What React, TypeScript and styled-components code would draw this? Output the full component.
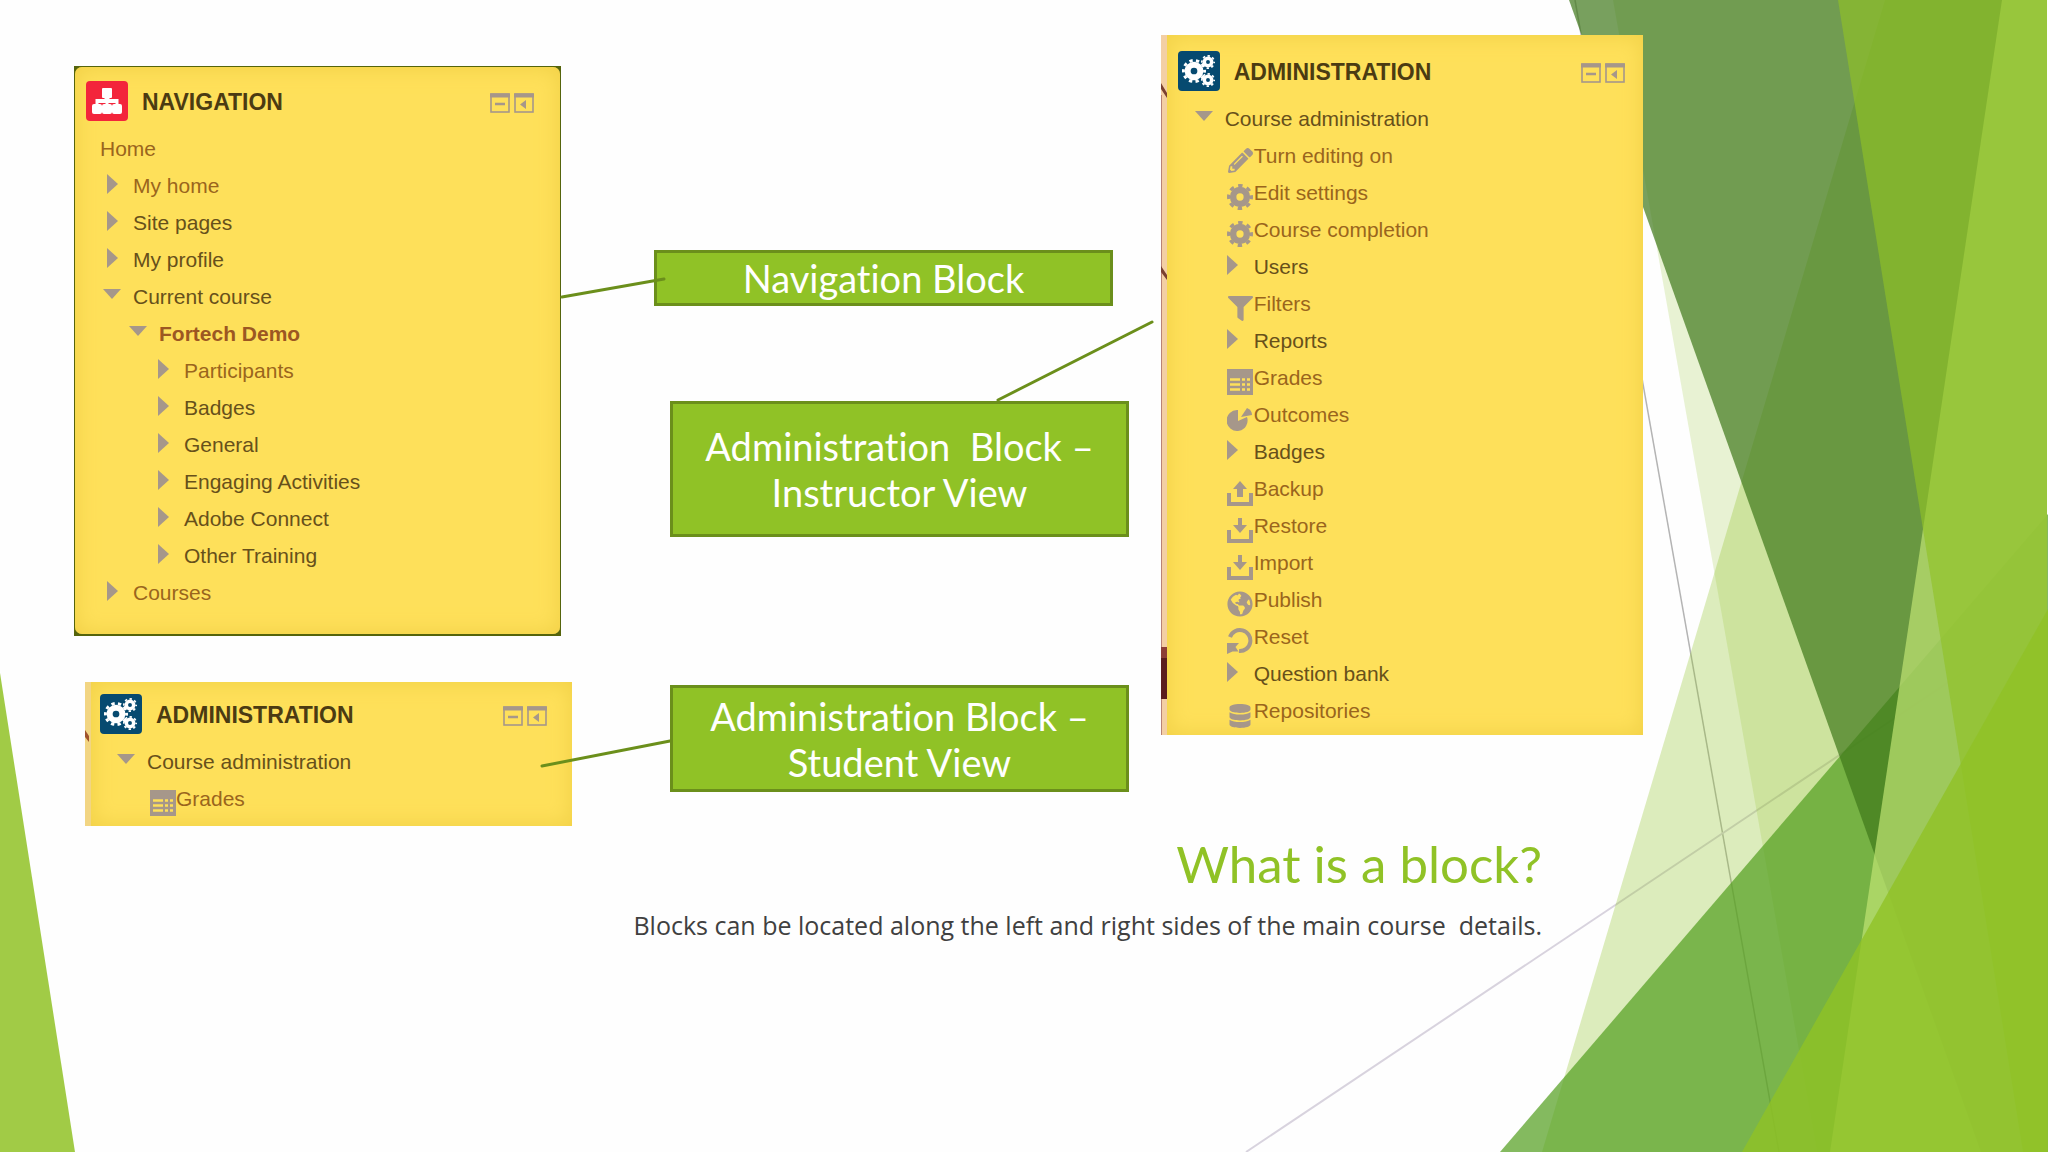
import React, { ReactNode } from "react";
import styled, { createGlobalStyle, css } from "styled-components";
import { FaDatabase, FaFilter, FaGlobeAmericas, FaPencilAlt } from "react-icons/fa";

const color = {
  accent: "#90c226",
  accentDark: "#6b8f1b",
  leaf: "#54a021",
  forest: "#3f7819",
  panel: "#fee05a",
  panelEdge: "#f0cf45",
  heading: "#4b3b12",
  label: "#67501a",
  link: "#9a651d",
  glyph: "#a6978a",
  body: "#404040",
};

const GlobalStyle = createGlobalStyle`
  *, *::before, *::after { box-sizing: border-box; }
  body { margin: 0; background: #fefefe; }
`;

const Slide = styled.main`
  position: relative;
  min-height: 100vh;
  overflow: hidden;
  font-family: Lato, "Open Sans", sans-serif;
  font-variant-ligatures: none;
`;

const Overlay = styled.svg<{ $front?: boolean }>`
  position: absolute;
  inset: 0;
  width: 100%;
  height: 100%;
  pointer-events: none;
  z-index: ${(p) => (p.$front ? 2 : 0)};
`;

const Board = styled.div`
  position: relative;
  z-index: 1;
  display: grid;
  grid-template-columns: 498fr 528fr 482fr;
  gap: 30px;
  align-items: start;
  padding: 35px 405px 0 74px;
`;

const LeftColumn = styled.div`
  display: flex;
  flex-direction: column;
  gap: 46px;
  padding-top: 31px;
`;

const MiddleColumn = styled.div`
  display: flex;
  flex-direction: column;
  padding: 215px 2px 0 52px;
`;

const Callout = styled.div<{ $height: number; $before?: number; $shifted?: boolean }>`
  display: flex;
  align-items: center;
  justify-content: center;
  width: calc(100% - 16px);
  min-height: ${(p) => p.$height}px;
  margin-top: ${(p) => p.$before ?? 0}px;
  align-self: ${(p) => (p.$shifted ? "flex-end" : "flex-start")};
  border: 3px solid ${color.accentDark};
  background: ${color.accent};
  color: #fff;
  font-size: 38px;
  line-height: 46px;
  text-align: center;
`;

const Spaced = styled.span`
  white-space: pre;
`;

const Frame = styled.section<{ $outlined?: boolean; $inset?: boolean }>`
  display: flex;
  font-family: "Liberation Sans", Arial, sans-serif;
  ${(p) =>
    p.$outlined &&
    css`
      margin-right: 11px;
      padding: 1px 1px 2px;
      background: #55640c;
    `}
  ${(p) =>
    p.$inset &&
    css`
      margin-left: 11px;
    `}
`;

const Edge = styled.svg`
  flex: none;
  width: 6px;
`;

const PanelBody = styled.div<{ $top: number; $right: number; $bottom: number; $left: number; $rounded?: boolean }>`
  flex: 1;
  min-width: 0;
  padding: ${(p) => `${p.$top}px ${p.$right}px ${p.$bottom}px ${p.$left}px`};
  border-radius: ${(p) => (p.$rounded ? 7 : 0)}px;
  background: ${color.panel};
  box-shadow: inset 0 0 22px ${color.panelEdge};
`;

const PanelHeader = styled.header`
  display: flex;
  align-items: center;
  height: 40px;
  margin-bottom: 9px;
`;

const Badge = styled.span<{ $fill: string }>`
  display: flex;
  align-items: center;
  justify-content: center;
  width: 42px;
  height: 40px;
  margin-right: 14px;
  border-radius: 4px;
  background: ${(p) => p.$fill};
  color: #fff;
`;

const PanelTitle = styled.h2`
  flex: 1;
  margin: 0;
  padding-top: 2px;
  color: ${color.heading};
  font-size: 23px;
  line-height: 26px;
  font-weight: 700;
`;

const HeaderButtons = styled.div`
  display: flex;
  gap: 4px;
  padding-top: 3px;
`;

const bareButton = css`
  display: flex;
  padding: 0;
  border: 0;
  background: none;
  color: ${color.glyph};
  cursor: pointer;
`;

const IconButton = styled.button`
  ${bareButton}
`;

const Tree = styled.ul`
  margin: 0;
  padding: 0;
  list-style: none;
`;

const Row = styled.li<{ $indent: number }>`
  display: flex;
  align-items: center;
  height: 37px;
  padding-left: ${(p) => p.$indent}px;
  font-size: 21px;
  line-height: 24px;
  white-space: nowrap;
`;

const Toggle = styled.button<{ $tight?: boolean }>`
  ${bareButton}
  width: ${(p) => (p.$tight ? 27 : 31)}px;
  height: 24px;
`;

const RowIcon = styled.span`
  display: flex;
  align-items: flex-end;
  justify-content: center;
  width: 27px;
  height: 34px;
  color: ${color.glyph};
`;

const Link = styled.a<{ $strong?: boolean }>`
  color: ${(p) => (p.$strong ? "#9c5722" : color.link)};
  font-weight: ${(p) => (p.$strong ? 700 : 400)};
  text-decoration: none;
`;

const Label = styled.span`
  color: ${color.label};
`;

const Caption = styled.div`
  position: relative;
  z-index: 1;
  padding: 7px 506px 0 74px;
  text-align: right;
`;

const Heading = styled.h1`
  margin: 0;
  color: ${color.accent};
  font-size: 51px;
  line-height: 62px;
  font-weight: 400;
`;

const Description = styled.p`
  margin: 15px 0 0;
  color: ${color.body};
  font-family: "Open Sans", Lato, sans-serif;
  font-size: 25px;
  line-height: 30px;
  white-space: pre-wrap;
`;

const Backdrop = () => (
  <Overlay viewBox="0 0 2048 1152" preserveAspectRatio="none" aria-hidden="true">
    <line x1="1575" y1="0" x2="1779" y2="1152" stroke="#b4b4b4" strokeWidth="1.5" />
    <line x1="1246" y1="1152" x2="2046" y2="617" stroke="#d8d3de" strokeWidth="2" />
    <polygon points="1885,0 2047,0 2047,1152 1542,1152" fill={color.accent} fillOpacity="0.3" />
    <polygon points="1613,0 2047,0 2047,1152 1817,1152" fill={color.accent} fillOpacity="0.2" />
    <polygon points="2048,514 2048,1152 1500,1152" fill={color.leaf} fillOpacity="0.72" />
    <polygon points="1569,0 2047,0 2047,1152 1981,1152" fill={color.forest} fillOpacity="0.7" />
    <polygon points="2002,0 2047,0 2047,1152 1830,1152" fill="#c0e474" fillOpacity="0.7" />
    <polygon points="1838,0 2047,0 2047,1152 2023,1152" fill={color.accent} fillOpacity="0.65" />
    <polygon points="2048,609 2048,1152 1742,1152" fill={color.accent} fillOpacity="0.8" />
    <polygon points="0,673 75,1152 0,1152" fill={color.accent} fillOpacity="0.85" />
  </Overlay>
);

const Connectors = () => (
  <Overlay $front viewBox="0 0 2048 1152" preserveAspectRatio="none" aria-hidden="true">
    <g stroke={color.accentDark} strokeWidth="3" strokeLinecap="round">
      <line x1="562" y1="297" x2="664" y2="279" />
      <line x1="998" y1="400" x2="1152" y2="322" />
      <line x1="542" y1="766" x2="670" y2="741" />
    </g>
  </Overlay>
);

const SitemapIcon = () => (
  <svg width="30" height="28" viewBox="0 0 30 28" fill="currentColor" aria-hidden="true">
    <rect x="10" y="1" width="10" height="10" rx="1" />
    <path d="M12.500 9h5v3h9v6h-3v-2h-7v2h-3v-2h-7v2h-3v-6h9z" />
    <rect x="0" y="17" width="10" height="10" rx="2" />
    <rect x="10" y="17" width="10" height="10" rx="2" />
    <rect x="20" y="17" width="10" height="10" rx="2" />
  </svg>
);

const Gear = ({ x, y, radius, teeth }: { x: number; y: number; radius: number; teeth: number }) => {
  const rim = radius * 0.88;
  const tooth = (Math.PI * rim) / teeth;
  return (
    <g fill="none" stroke="currentColor">
      <circle cx={x} cy={y} r={radius * 0.53} strokeWidth={radius * 0.5} />
      <circle cx={x} cy={y} r={rim} strokeWidth={radius * 0.24} strokeDasharray={`${tooth} ${tooth}`} strokeDashoffset={tooth / 2} />
    </g>
  );
};

const GearIcon = () => (
  <svg width="26" height="26" viewBox="0 0 26 26" aria-hidden="true">
    <Gear x={13} y={13} radius={13} teeth={8} />
  </svg>
);

const GearsIcon = () => (
  <svg width="34" height="32" viewBox="0 0 34 32" aria-hidden="true">
    <Gear x={12} y={16} radius={12} teeth={10} />
    <Gear x={26} y={7} radius={7} teeth={8} />
    <Gear x={26} y={25} radius={7} teeth={8} />
  </svg>
);

const WindowIcon = ({ children }: { children: ReactNode }) => (
  <svg width="20" height="20" viewBox="0 0 20 20" fill="none" stroke="currentColor" aria-hidden="true">
    <rect x="1" y="1" width="18" height="18" strokeWidth="1.600" />
    <path d="M0 2.500h20" strokeWidth="4" />
    {children}
  </svg>
);

const ClosedArrow = ({ inset }: { inset: number }) => (
  <svg width="20" height="20" viewBox="0 0 20 20" fill="currentColor" aria-hidden="true">
    <path d={`M${inset} 0l11 10l-11 10z`} />
  </svg>
);

const OpenArrow = () => (
  <svg width="20" height="20" viewBox="0 0 20 20" fill="currentColor" aria-hidden="true">
    <path d="M1 4h18l-9 10z" />
  </svg>
);

const TableIcon = () => (
  <svg width="26" height="26" viewBox="0 0 26 26" fill="none" aria-hidden="true">
    <path d="M0 0h26v26H0z" fill="currentColor" />
    <path
      d="M3 10.500h10M3 15.500h10M3 20.500h10M15 10.500h3M15 15.500h3M15 20.500h3M20 10.500h3M20 15.500h3M20 20.500h3"
      stroke={color.panel}
      strokeWidth="2.500"
    />
  </svg>
);

const TrayIcon = ({ up }: { up?: boolean }) => (
  <svg width="26" height="26" viewBox="0 0 26 26" fill="currentColor" aria-hidden="true">
    <path d="M0 13h4v9h18v-9h4v13H0z" />
    <path d={up ? "M13 1l7 8h-4v8h-6V9H6z" : "M11 1h4v7h5l-7 8l-7-8h5z"} />
  </svg>
);

const PieIcon = () => (
  <svg width="26" height="26" viewBox="0 0 26 26" fill="currentColor" aria-hidden="true">
    <path d="M11 4v11l9-4a10.500 10.500 0 1 1-9-7z" />
    <path d="M14 11l6-9q5 2 5 7z" />
  </svg>
);

const ResetIcon = () => (
  <svg width="26" height="26" viewBox="0 0 26 26" aria-hidden="true">
    <path d="M3 9a10.500 10.500 0 1 1 9 14" fill="none" stroke="currentColor" strokeWidth="4" />
    <path d="M0 15h12l-3.500 4l3 4.500l-6 0l-5.500 2.500z" fill="currentColor" />
  </svg>
);

type Item = {
  text: string;
  depth: number;
  state?: "open" | "closed";
  icon?: ReactNode;
  link?: boolean;
  strong?: boolean;
};

const navigationItems: Item[] = [
  { text: "Home", depth: 14, link: true },
  { text: "My home", depth: 16, state: "closed", link: true },
  { text: "Site pages", depth: 16, state: "closed" },
  { text: "My profile", depth: 16, state: "closed" },
  { text: "Current course", depth: 16, state: "open" },
  { text: "Fortech Demo", depth: 42, state: "open", link: true, strong: true },
  { text: "Participants", depth: 67, state: "closed", link: true },
  { text: "Badges", depth: 67, state: "closed" },
  { text: "General", depth: 67, state: "closed" },
  { text: "Engaging Activities", depth: 67, state: "closed" },
  { text: "Adobe Connect", depth: 67, state: "closed" },
  { text: "Other Training", depth: 67, state: "closed" },
  { text: "Courses", depth: 16, state: "closed", link: true },
];

const instructorItems: Item[] = [
  { text: "Course administration", depth: 16, state: "open" },
  { text: "Turn editing on", depth: 49, icon: <FaPencilAlt size={25} />, link: true },
  { text: "Edit settings", depth: 49, icon: <GearIcon />, link: true },
  { text: "Course completion", depth: 49, icon: <GearIcon />, link: true },
  { text: "Users", depth: 49, state: "closed" },
  { text: "Filters", depth: 49, icon: <FaFilter size={25} />, link: true },
  { text: "Reports", depth: 49, state: "closed" },
  { text: "Grades", depth: 49, icon: <TableIcon />, link: true },
  { text: "Outcomes", depth: 49, icon: <PieIcon />, link: true },
  { text: "Badges", depth: 49, state: "closed" },
  { text: "Backup", depth: 49, icon: <TrayIcon up />, link: true },
  { text: "Restore", depth: 49, icon: <TrayIcon />, link: true },
  { text: "Import", depth: 49, icon: <TrayIcon />, link: true },
  { text: "Publish", depth: 49, icon: <FaGlobeAmericas size={26} />, link: true },
  { text: "Reset", depth: 49, icon: <ResetIcon />, link: true },
  { text: "Question bank", depth: 49, state: "closed" },
  { text: "Repositories", depth: 49, icon: <FaDatabase size={24} />, link: true },
];

const studentItems: Item[] = [
  { text: "Course administration", depth: 16, state: "open" },
  { text: "Grades", depth: 49, icon: <TableIcon />, link: true },
];

const Header = ({ title, badge, fill }: { title: string; badge: ReactNode; fill: string }) => (
  <PanelHeader>
    <Badge $fill={fill}>{badge}</Badge>
    <PanelTitle>{title}</PanelTitle>
    <HeaderButtons>
      <IconButton type="button" aria-label="Hide block">
        <WindowIcon>
          <path d="M5 11h10" strokeWidth="2.500" />
        </WindowIcon>
      </IconButton>
      <IconButton type="button" aria-label="Dock block">
        <WindowIcon>
          <path d="M12 7v9l-6-4.500z" fill="currentColor" stroke="none" />
        </WindowIcon>
      </IconButton>
    </HeaderButtons>
  </PanelHeader>
);

const ItemTree = ({ items }: { items: Item[] }) => (
  <Tree>
    {items.map((item) => {
      const tight = item.depth === 49;
      return (
        <Row key={item.text} $indent={item.depth}>
          {item.state && (
            <Toggle type="button" $tight={tight} aria-expanded={item.state === "open"} aria-label={`Toggle ${item.text}`}>
              {item.state === "open" ? <OpenArrow /> : <ClosedArrow inset={tight ? 0 : 5} />}
            </Toggle>
          )}
          {item.icon && <RowIcon>{item.icon}</RowIcon>}
          {item.link ? (
            <Link href="#" $strong={item.strong}>
              {item.text}
            </Link>
          ) : (
            <Label>{item.text}</Label>
          )}
        </Row>
      );
    })}
  </Tree>
);

export default function App() {
  return (
    <>
      <GlobalStyle />
      <Slide>
        <Backdrop />
        <Board>
          <LeftColumn>
            <Frame $outlined>
              <PanelBody $rounded $top={14} $right={26} $bottom={23} $left={11}>
                <Header title="NAVIGATION" badge={<SitemapIcon />} fill="#f3253b" />
                <ItemTree items={navigationItems} />
              </PanelBody>
            </Frame>
            <Frame $inset>
              <Edge viewBox="0 0 6 144" preserveAspectRatio="none" aria-hidden="true">
                <path d="M0 0h6v144H0z" fill="#f2d583" />
                <path d="M0 48l4 6v6l-4-5z" fill="#a0522d" />
              </Edge>
              <PanelBody $top={12} $right={25} $bottom={9} $left={9}>
                <Header title="ADMINISTRATION" badge={<GearsIcon />} fill="#064a70" />
                <ItemTree items={studentItems} />
              </PanelBody>
            </Frame>
          </LeftColumn>
          <MiddleColumn>
            <Callout $height={56}>Navigation Block</Callout>
            <Callout $height={136} $before={95} $shifted>
              <span>
                <Spaced>Administration  Block –</Spaced>
                <br />
                Instructor View
              </span>
            </Callout>
            <Callout $height={107} $before={148} $shifted>
              <span>
                Administration Block –
                <br />
                Student View
              </span>
            </Callout>
          </MiddleColumn>
          <Frame>
            <Edge viewBox="0 0 6 700" preserveAspectRatio="none" aria-hidden="true">
              <path d="M0 0h6v700H0z" fill="#f3cfa4" />
              <path d="M0 60h1v640H0z" fill="#b98274" />
              <path d="M0 48l6 10v5l-6-9zM0 231l6 9v5l-6-8z" fill="#7a4030" />
              <path d="M0 612h6v52H0z" fill="#5b1e1e" />
              <path d="M0 612h6v11H0z" fill="#8d3f36" />
            </Edge>
            <PanelBody $top={16} $right={18} $bottom={6} $left={11}>
              <Header title="ADMINISTRATION" badge={<GearsIcon />} fill="#064a70" />
              <ItemTree items={instructorItems} />
            </PanelBody>
          </Frame>
        </Board>
        <Caption>
          <Heading>What is a block?</Heading>
          <Description>{"Blocks can be located along the left and right sides of the main course  details."}</Description>
        </Caption>
        <Connectors />
      </Slide>
    </>
  );
}
